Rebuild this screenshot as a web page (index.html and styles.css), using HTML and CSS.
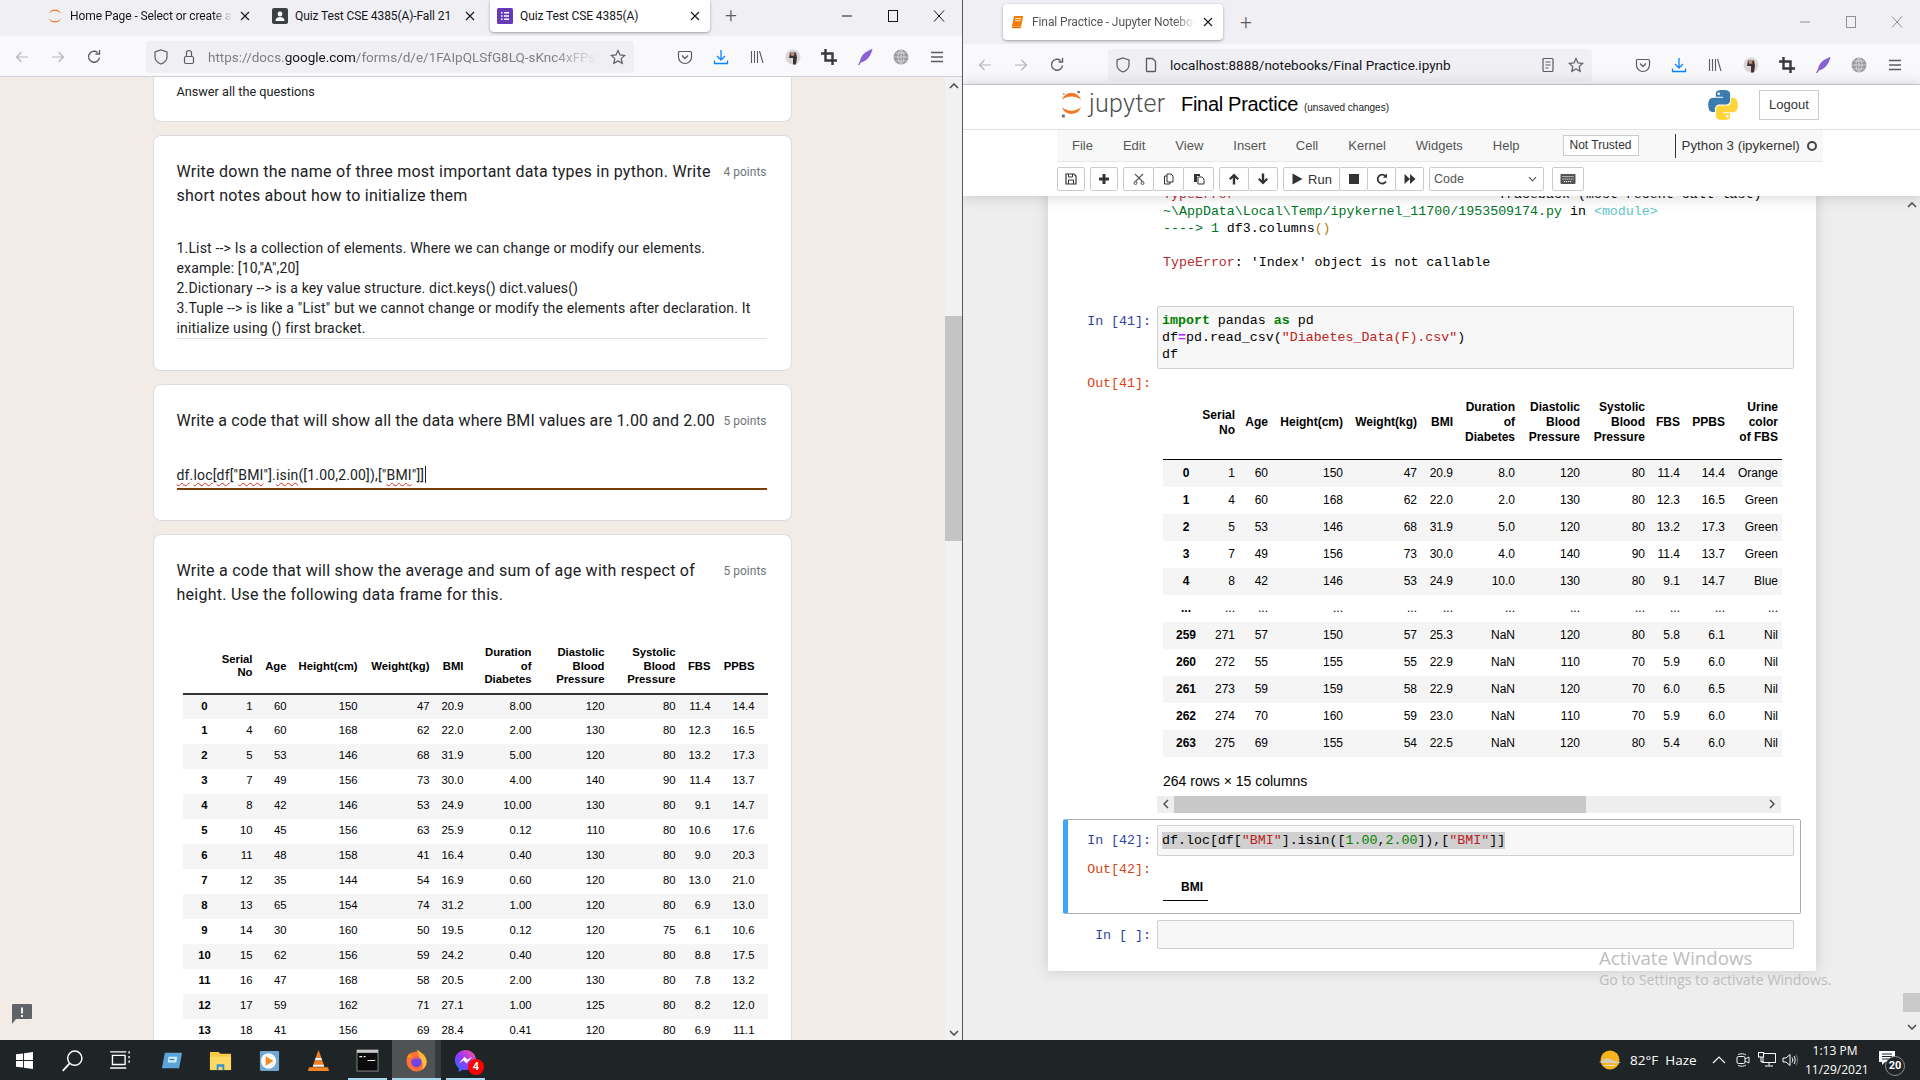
FILE: index.html
```html
<!DOCTYPE html>
<html lang="en">
<head>
    <meta charset="UTF-8">
    <title>Quiz Test CSE 4385(A)</title>
    <link rel="stylesheet" href="styles.css">
</head>
<body>
    <!-- shared browser toolbar icons -->
    <svg class="icon-defs" width="0" height="0">
        <symbol id="i-back" viewBox="0 0 16 16"><path d="M14 8H2.5M7.5 3l-5 5 5 5" fill="none" stroke="currentColor" stroke-width="1.2"/></symbol>
        <symbol id="i-forward" viewBox="0 0 16 16"><path d="M2 8h11.5M8.5 3l5 5-5 5" fill="none" stroke="currentColor" stroke-width="1.2"/></symbol>
        <symbol id="i-reload" viewBox="0 0 16 16"><path d="M13.5 8.5a5.5 5.5 0 1 1-2-5M13.5 1v4h-4" fill="none" stroke="currentColor" stroke-width="1.4"/></symbol>
        <symbol id="i-shield" viewBox="0 0 16 16"><path d="M8 1l6 2v5c0 3.2-2.6 5.7-6 7-3.4-1.3-6-3.8-6-7V3z" fill="none" stroke="currentColor" stroke-width="1.2"/></symbol>
        <symbol id="i-lock" viewBox="0 0 16 16"><rect x="3.5" y="7.5" width="9" height="7" rx="1.5" fill="none" stroke="currentColor" stroke-width="1.2"/><path d="M5.5 7.5V4a2.5 2.5 0 0 1 5 0v3.5" fill="none" stroke="currentColor" stroke-width="1.2"/></symbol>
        <symbol id="i-page" viewBox="0 0 16 16"><path d="M3.5 1.5h6l3 3V14a.5.5 0 0 1-.5.5H4a.5.5 0 0 1-.5-.5z" fill="none" stroke="currentColor" stroke-width="1.3"/></symbol>
        <symbol id="i-reader" viewBox="0 0 16 16"><rect x="3" y="1.5" width="10" height="13" rx="1" fill="none" stroke="currentColor" stroke-width="1.2"/><path d="M5.5 5h5M5.5 8h5M5.5 11h3" stroke="currentColor" stroke-width="1.2"/></symbol>
        <symbol id="i-star" viewBox="0 0 16 16"><path d="M8 1.500l2 4.400 4.700.5-3.500 3.200 1 4.700L8 11.900l-4.200 2.400 1-4.700-3.500-3.200 4.700-.5z" fill="none" stroke="currentColor" stroke-width="1.2"/></symbol>
        <symbol id="i-pocket" viewBox="0 0 16 16"><path d="M2.5 2.500h11a1 1 0 0 1 1 1V8a6.500 6.500 0 0 1-13 0V3.500a1 1 0 0 1 1-1z" fill="none" stroke="currentColor" stroke-width="1.2"/><path d="M5 6.500l3 3 3-3" fill="none" stroke="currentColor" stroke-width="1.3"/></symbol>
        <symbol id="i-download" viewBox="0 0 16 16"><path d="M8 1v9.500M4 7l4 4 4-4M1.500 11.500v3h13v-3" fill="none" stroke="#0a84ff" stroke-width="1.3"/></symbol>
        <symbol id="i-library" viewBox="0 0 16 16"><path d="M2.5 2v12M5.500 2v12M8.500 2v12M10.500 2l3.500 12" fill="none" stroke="currentColor" stroke-width="1.1"/></symbol>
        <symbol id="i-avatar" viewBox="0 0 16 16"><circle cx="8" cy="8" r="7.5" fill="#d9d4d6"/><path d="M5 3.500h6l1 5-1 7H8V9H4z" fill="#3d3238"/><circle cx="7.5" cy="5" r="2" fill="#b98f80"/></symbol>
        <symbol id="i-crop" viewBox="0 0 16 16"><path d="M4.500 0v11.500H16M0 4.500h11.500V16" fill="none" stroke="#38383d" stroke-width="2.4"/></symbol>
        <symbol id="i-feather" viewBox="0 0 16 16"><path d="M15.500 0C9 2 4 6 3 12l-2 4 1 .5 2-3C10 12 14 7 15.500 0z" fill="#8a63d2"/></symbol>
        <symbol id="i-globe" viewBox="0 0 16 16"><circle cx="8" cy="8" r="7.5" fill="#9a9a9e"/><path d="M1 8h14M8 .5v15M2.500 4h11M2.500 12h11M8 .5C4 4 4 12 8 15.500M8 .5c4 3.500 4 11.500 0 15" fill="none" stroke="#e5e5e8" stroke-width=".7"/></symbol>
        <symbol id="i-menu" viewBox="0 0 16 16"><path d="M2 3.500h12M2 8h12M2 12.500h12" stroke="currentColor" stroke-width="1.3"/></symbol>
        <symbol id="i-min" viewBox="0 0 12 12"><path d="M1 6h10" stroke="currentColor"/></symbol>
        <symbol id="i-max" viewBox="0 0 12 12"><rect x="1.5" y=".5" width="9" height="11" fill="none" stroke="currentColor"/></symbol>
        <symbol id="i-close" viewBox="0 0 12 12"><path d="M1 .5l10 11M11 .5l-10 11" stroke="currentColor"/></symbol>
        <symbol id="i-tabx" viewBox="0 0 10 10"><path d="M1 1l8 8M9 1l-8 8" stroke="currentColor" stroke-width="1.1"/></symbol>
    </svg>

    <div class="desktop">
        <!-- left browser window: google form -->
        <section class="window window-left">
            <div class="tabstrip">
                <div class="tab">
                    <svg class="favicon" viewBox="0 0 16 16"><path d="M2 5.500a6.500 6.500 0 0 1 12 0 8 8 0 0 0-12 0zM2 10.500a6.500 6.500 0 0 0 12 0 8 8 0 0 1-12 0z" fill="#f37726"/></svg>
                    <span class="tab-title fade">Home Page - Select or create a notebook</span>
                    <svg class="tab-x"><use href="#i-tabx"/></svg>
                </div>
                <div class="tab">
                    <svg class="favicon" viewBox="0 0 16 16"><rect width="16" height="16" rx="2" fill="#3c4043"/><circle cx="8" cy="6" r="2.4" fill="#fff"/><path d="M3.500 13c0-3 2-4 4.500-4s4.500 1 4.500 4z" fill="#fff"/></svg>
                    <span class="tab-title">Quiz Test CSE 4385(A)-Fall 21</span>
                    <svg class="tab-x"><use href="#i-tabx"/></svg>
                </div>
                <div class="tab tab-active">
                    <svg class="favicon" viewBox="0 0 16 16"><rect width="16" height="16" rx="1.5" fill="#673ab7"/><path d="M4 4h1.500v1.500H4zM4 7.300h1.500v1.500H4zM4 10.500h1.500V12H4zM7 4h5v1.500H7zM7 7.300h5v1.500H7zM7 10.500h5V12H7z" fill="#fff"/></svg>
                    <span class="tab-title">Quiz Test CSE 4385(A)</span>
                    <svg class="tab-x"><use href="#i-tabx"/></svg>
                </div>
                <div class="tab-plus">+</div>
                <div class="win-controls">
                    <svg><use href="#i-min"/></svg>
                    <svg><use href="#i-max"/></svg>
                    <svg><use href="#i-close"/></svg>
                </div>
            </div>
            <div class="navbar">
                <svg class="nav-icon muted"><use href="#i-back"/></svg>
                <svg class="nav-icon muted"><use href="#i-forward"/></svg>
                <svg class="nav-icon"><use href="#i-reload"/></svg>
                <div class="urlbar url-left">
                    <svg class="nav-icon"><use href="#i-shield"/></svg>
                    <svg class="nav-icon"><use href="#i-lock"/></svg>
                    <span class="url-text fade">https://docs.<b>google.com</b>/forms/d/e/1FAIpQLSfG8LQ-sKnc4xFPsU5t</span>
                    <svg class="nav-icon"><use href="#i-star"/></svg>
                </div>
                <div class="nav-tools">
                    <svg class="nav-icon"><use href="#i-pocket"/></svg>
                    <svg class="nav-icon"><use href="#i-download"/></svg>
                    <svg class="nav-icon"><use href="#i-library"/></svg>
                    <svg class="nav-icon"><use href="#i-avatar"/></svg>
                    <svg class="nav-icon"><use href="#i-crop"/></svg>
                    <svg class="nav-icon"><use href="#i-feather"/></svg>
                    <svg class="nav-icon"><use href="#i-globe"/></svg>
                    <svg class="nav-icon"><use href="#i-menu"/></svg>
                </div>
            </div>
            <div class="form-page">
                <div class="form-scroll">
                    <div class="card card-intro">Answer all the questions</div>

                    <div class="card">
                        <div class="q-head">
                            <div class="q-title">Write down the name of three most important data types in python. Write short notes about how to initialize them</div>
                            <div class="q-points">4 points</div>
                        </div>
                        <div class="q-answer">1.List --&gt; Is a collection of elements. Where we can change or modify our elements.<br>example: [10,"A",20]<br>2.Dictionary --&gt; is a key value structure. dict.keys() dict.values()<br>3.Tuple --&gt; is like a "List" but we cannot change or modify the elements after declaration. It initialize using () first bracket.</div>
                    </div>

                    <div class="card card-code">
                        <div class="q-head">
                            <div class="q-title">Write a code that will show all the data where BMI values are 1.00 and 2.00</div>
                            <div class="q-points">5 points</div>
                        </div>
                        <div class="q-answer q-answer-focus"><span class="typo">df</span>.<span class="typo">loc</span>[<span class="typo">df</span>["<span class="typo">BMI</span>"].<span class="typo">isin</span>([1.00,2.00]),["<span class="typo">BMI</span>"]]<span class="caret"></span></div>
                    </div>

                    <div class="card card-last">
                        <div class="q-head">
                            <div class="q-title">Write a code that will show the average and sum of age with respect of height. Use the following data frame for this.</div>
                            <div class="q-points">5 points</div>
                        </div>
                        <table class="df df-form">
                            <colgroup><col><col><col><col><col><col><col><col><col><col><col></colgroup>
                            <thead>
                                <tr><th></th><th>Serial<br>No</th><th>Age</th><th>Height(cm)</th><th>Weight(kg)</th><th>BMI</th><th>Duration<br>of<br>Diabetes</th><th>Diastolic<br>Blood<br>Pressure</th><th>Systolic<br>Blood<br>Pressure</th><th>FBS</th><th>PPBS</th></tr>
                            </thead>
                            <tbody>
                                <tr><th>0</th><td>1</td><td>60</td><td>150</td><td>47</td><td>20.9</td><td>8.00</td><td>120</td><td>80</td><td>11.4</td><td>14.4</td></tr>
                                <tr><th>1</th><td>4</td><td>60</td><td>168</td><td>62</td><td>22.0</td><td>2.00</td><td>130</td><td>80</td><td>12.3</td><td>16.5</td></tr>
                                <tr><th>2</th><td>5</td><td>53</td><td>146</td><td>68</td><td>31.9</td><td>5.00</td><td>120</td><td>80</td><td>13.2</td><td>17.3</td></tr>
                                <tr><th>3</th><td>7</td><td>49</td><td>156</td><td>73</td><td>30.0</td><td>4.00</td><td>140</td><td>90</td><td>11.4</td><td>13.7</td></tr>
                                <tr><th>4</th><td>8</td><td>42</td><td>146</td><td>53</td><td>24.9</td><td>10.00</td><td>130</td><td>80</td><td>9.1</td><td>14.7</td></tr>
                                <tr><th>5</th><td>10</td><td>45</td><td>156</td><td>63</td><td>25.9</td><td>0.12</td><td>110</td><td>80</td><td>10.6</td><td>17.6</td></tr>
                                <tr><th>6</th><td>11</td><td>48</td><td>158</td><td>41</td><td>16.4</td><td>0.40</td><td>130</td><td>80</td><td>9.0</td><td>20.3</td></tr>
                                <tr><th>7</th><td>12</td><td>35</td><td>144</td><td>54</td><td>16.9</td><td>0.60</td><td>120</td><td>80</td><td>13.0</td><td>21.0</td></tr>
                                <tr><th>8</th><td>13</td><td>65</td><td>154</td><td>74</td><td>31.2</td><td>1.00</td><td>120</td><td>80</td><td>6.9</td><td>13.0</td></tr>
                                <tr><th>9</th><td>14</td><td>30</td><td>160</td><td>50</td><td>19.5</td><td>0.12</td><td>120</td><td>75</td><td>6.1</td><td>10.6</td></tr>
                                <tr><th>10</th><td>15</td><td>62</td><td>156</td><td>59</td><td>24.2</td><td>0.40</td><td>120</td><td>80</td><td>8.8</td><td>17.5</td></tr>
                                <tr><th>11</th><td>16</td><td>47</td><td>168</td><td>58</td><td>20.5</td><td>2.00</td><td>130</td><td>80</td><td>7.8</td><td>13.2</td></tr>
                                <tr><th>12</th><td>17</td><td>59</td><td>162</td><td>71</td><td>27.1</td><td>1.00</td><td>125</td><td>80</td><td>8.2</td><td>12.0</td></tr>
                                <tr><th>13</th><td>18</td><td>41</td><td>156</td><td>69</td><td>28.4</td><td>0.41</td><td>120</td><td>80</td><td>6.9</td><td>11.1</td></tr>
                            </tbody>
                        </table>
                    </div>
                </div>
                <div class="scrollbar">
                    <svg class="sb-arrow" viewBox="0 0 10 6"><path d="M1 5l4-4 4 4" fill="none" stroke="#505050" stroke-width="1.6"/></svg>
                    <div class="sb-thumb"></div>
                    <svg class="sb-arrow sb-bottom" viewBox="0 0 10 6"><path d="M1 1l4 4 4-4" fill="none" stroke="#505050" stroke-width="1.6"/></svg>
                </div>
                <svg class="feedback" viewBox="0 0 20 20"><path d="M1 0h18a1 1 0 0 1 1 1v13a1 1 0 0 1-1 1H4l-4 5V1a1 1 0 0 1 1-1z" fill="#5f6368"/><path d="M9 3.500h2v6H9zM9 11h2v2H9z" fill="#f3ebe6"/></svg>
            </div>
        </section>

        <!-- right browser window: jupyter notebook -->
        <section class="window window-right">
            <div class="tabstrip tabstrip-right">
                <div class="tab tab-active">
                    <svg class="favicon" viewBox="0 0 16 16"><path d="M3.500 1H14l-2.500 12H1z" fill="#f57c00"/><path d="M5 4h6.500M4.500 6.500H11" stroke="#fff" stroke-width="1"/><path d="M1 13.500h10.500l-.3 1.500H1z" fill="#ef6c00"/></svg>
                    <span class="tab-title fade">Final Practice - Jupyter Notebook</span>
                    <svg class="tab-x"><use href="#i-tabx"/></svg>
                </div>
                <div class="tab-plus">+</div>
                <div class="win-controls win-controls-dim">
                    <svg><use href="#i-min"/></svg>
                    <svg><use href="#i-max"/></svg>
                    <svg><use href="#i-close"/></svg>
                </div>
            </div>
            <div class="navbar">
                <svg class="nav-icon muted"><use href="#i-back"/></svg>
                <svg class="nav-icon muted"><use href="#i-forward"/></svg>
                <svg class="nav-icon"><use href="#i-reload"/></svg>
                <div class="urlbar url-right">
                    <svg class="nav-icon"><use href="#i-shield"/></svg>
                    <svg class="nav-icon"><use href="#i-page"/></svg>
                    <span class="url-text url-dark">localhost:8888/notebooks/Final Practice.ipynb</span>
                    <svg class="nav-icon"><use href="#i-reader"/></svg>
                    <svg class="nav-icon"><use href="#i-star"/></svg>
                </div>
                <div class="nav-tools">
                    <svg class="nav-icon"><use href="#i-pocket"/></svg>
                    <svg class="nav-icon"><use href="#i-download"/></svg>
                    <svg class="nav-icon"><use href="#i-library"/></svg>
                    <svg class="nav-icon"><use href="#i-avatar"/></svg>
                    <svg class="nav-icon"><use href="#i-crop"/></svg>
                    <svg class="nav-icon"><use href="#i-feather"/></svg>
                    <svg class="nav-icon"><use href="#i-globe"/></svg>
                    <svg class="nav-icon"><use href="#i-menu"/></svg>
                </div>
            </div>

            <header class="nb-header">
                <div class="nb-top">
                    <svg class="jp-mark" viewBox="0 0 22 30">
                        <path d="M1 10C3 5 7 3 11 3s8 2 10 7C18 7.500 14.500 6.500 11 6.500S4 7.500 1 10zM1 18c3 2.500 6.500 3.500 10 3.500s7-1 10-3.500c-2 5-6 7-10 7S3 23 1 18z" fill="#f37726"/>
                        <circle cx="18.500" cy="2" r="1.500" fill="#767677"/><circle cx="2.500" cy="27" r="1.800" fill="#767677"/><circle cx="3" cy="4" r="1" fill="#9e9e9e"/>
                    </svg>
                    <span class="jp-word">jupyter</span>
                    <span class="nb-name">Final Practice</span>
                    <span class="nb-save">(unsaved changes)</span>
                    <svg class="py-logo" viewBox="0 0 111 112">
                        <g><path d="M54.900 0C50.300 0 46 .4 42.100 1.100 30.800 3.100 28.700 7.300 28.700 15v10.200h26.700v3.400H18.700C10.900 28.600 4.100 33.300 2 42.100c-2.500 10.100-2.600 16.400 0 26.900 1.900 7.900 6.400 13.500 14.200 13.500h9.200V70.300c0-8.800 7.600-16.600 16.700-16.600h26.700c7.400 0 13.400-6.100 13.400-13.600V15c0-7.200-6.100-12.700-13.400-13.900C64.200.3 59.400 0 54.900 0z" fill="#3b7cb0"/><circle cx="39.500" cy="14" r="5" fill="#fff"/></g>
                        <g transform="rotate(180 55.500 56)"><path d="M54.900 0C50.300 0 46 .4 42.100 1.100 30.800 3.100 28.700 7.300 28.700 15v10.200h26.700v3.400H18.700C10.900 28.600 4.100 33.300 2 42.100c-2.500 10.100-2.600 16.400 0 26.900 1.900 7.900 6.400 13.500 14.200 13.500h9.200V70.300c0-8.800 7.600-16.600 16.700-16.600h26.700c7.400 0 13.400-6.100 13.400-13.600V15c0-7.200-6.100-12.700-13.400-13.900C64.200.3 59.400 0 54.900 0z" fill="#ffd43b"/><circle cx="39.500" cy="14" r="5" fill="#fff"/></g>
                    </svg>
                    <button class="logout">Logout</button>
                </div>
                <div class="nb-menu-row">
                    <nav class="nb-menu">
                        <span>File</span><span>Edit</span><span>View</span><span>Insert</span><span>Cell</span><span>Kernel</span><span>Widgets</span><span>Help</span>
                        <span class="not-trusted">Not Trusted</span>
                        <span class="kernel">Python 3 (ipykernel)<i class="kernel-dot"></i></span>
                    </nav>
                </div>
                <div class="nb-tools">
                    <div class="btn-group"><button class="tb tb-one"><svg viewBox="0 0 12 12"><path d="M1 1h8l2 2v8H1z" fill="none" stroke="#333" stroke-width="1.2"/><path d="M3.500 1v3h4V1M3.500 11V7h5v4" fill="none" stroke="#333"/></svg></button></div>
                    <div class="btn-group"><button class="tb tb-one"><svg viewBox="0 0 12 12"><path d="M4.500 1h3v3.500H11v3H7.500V11h-3V7.500H1v-3h3.500z" fill="#333"/></svg></button></div>
                    <div class="btn-group">
                        <button class="tb tb-mid"><svg viewBox="0 0 12 12"><path d="M2 1l8 8M10 1L2 9" stroke="#555" stroke-width="1.1"/><circle cx="2.5" cy="10" r="1.5" fill="none" stroke="#555"/><circle cx="9.5" cy="10" r="1.5" fill="none" stroke="#555"/></svg></button>
                        <button class="tb tb-mid"><svg viewBox="0 0 12 12"><path d="M4 1h4l2 2v6H4zM4 3H1.500v8h5.500V9" fill="#fff" stroke="#333"/></svg></button>
                        <button class="tb tb-mid"><svg viewBox="0 0 12 12"><path d="M1 1h6v2H4v6H1z" fill="#333"/><path d="M5 4h4l2 2v5H5z" fill="#fff" stroke="#333"/></svg></button>
                    </div>
                    <div class="btn-group">
                        <button class="tb tb-arrow"><svg viewBox="0 0 12 12"><path d="M6 .5l5 5-1.500 1.500L7.200 4.800V11.500H4.800V4.800L2.500 7 1 5.500z" fill="#333"/></svg></button>
                        <button class="tb tb-arrow"><svg viewBox="0 0 12 12"><path d="M6 11.500l5-5L9.500 5 7.200 7.200V.5H4.800v6.700L2.500 5 1 6.500z" fill="#333"/></svg></button>
                    </div>
                    <div class="btn-group">
                        <button class="tb tb-run"><svg viewBox="0 0 12 12"><path d="M1.500 .5l10 5.500-10 5.500z" fill="#333"/></svg>Run</button>
                        <button class="tb tb-ctl"><svg viewBox="0 0 12 12"><path d="M1 1h10v10H1z" fill="#333"/></svg></button>
                        <button class="tb tb-ctl"><svg viewBox="0 0 12 12"><path d="M10 8.500A4.500 4.500 0 1 1 9.500 3" fill="none" stroke="#333" stroke-width="1.8"/><path d="M11 .5v4.200H6.800z" fill="#333"/></svg></button>
                        <button class="tb tb-ctl"><svg viewBox="0 0 12 12"><path d="M.5 1L6 6 .5 11zM6 1l5.500 5L6 11z" fill="#333"/></svg></button>
                    </div>
                    <div class="cell-type">Code<svg viewBox="0 0 10 6"><path d="M1 1l4 4 4-4" fill="none" stroke="#444" stroke-width="1.2"/></svg></div>
                    <button class="tb tb-kbd"><svg viewBox="0 0 16 12"><rect x=".5" y="1" width="15" height="10" rx="1" fill="#555"/><path d="M2.500 3.500h11M2.500 6h11M4 8.500h8" stroke="#eee" stroke-width="1.2" stroke-dasharray="1.2 .8"/></svg></button>
                </div>
            </header>

            <div class="nb-site">
                <div class="notebook">
                    <pre class="trace"><span class="c-err">TypeError</span>                                 Traceback (most recent call last)
<span class="c-path">~\AppData\Local\Temp/ipykernel_11700/1953509174.py</span> in <span class="c-mod">&lt;module&gt;</span>
<span class="c-path">----&gt; 1</span> df3.columns<span class="c-paren">()</span>

<span class="c-err">TypeError</span>: 'Index' object is not callable</pre>

                    <div class="cell cell-41">
                        <div class="cell-row">
                            <div class="prompt p-in">In [41]:</div>
                            <pre class="input">
<span class="kw">import</span> pandas <span class="kw">as</span> pd
df<span class="op">=</span>pd.read_csv(<span class="str">"Diabetes_Data(F).csv"</span>)
df</pre>
                        </div>
                        <div class="cell-row out-row">
                            <div class="prompt p-out">Out[41]:</div>
                            <div class="output">
                                <table class="df df-nb">
                                    <colgroup><col><col><col><col><col><col><col><col><col><col><col><col></colgroup>
                                    <thead>
                                        <tr><th></th><th>Serial<br>No</th><th>Age</th><th>Height(cm)</th><th>Weight(kg)</th><th>BMI</th><th>Duration<br>of<br>Diabetes</th><th>Diastolic<br>Blood<br>Pressure</th><th>Systolic<br>Blood<br>Pressure</th><th>FBS</th><th>PPBS</th><th>Urine<br>color<br>of FBS</th></tr>
                                    </thead>
                                    <tbody>
                                        <tr><th>0</th><td>1</td><td>60</td><td>150</td><td>47</td><td>20.9</td><td>8.0</td><td>120</td><td>80</td><td>11.4</td><td>14.4</td><td>Orange</td></tr>
                                        <tr><th>1</th><td>4</td><td>60</td><td>168</td><td>62</td><td>22.0</td><td>2.0</td><td>130</td><td>80</td><td>12.3</td><td>16.5</td><td>Green</td></tr>
                                        <tr><th>2</th><td>5</td><td>53</td><td>146</td><td>68</td><td>31.9</td><td>5.0</td><td>120</td><td>80</td><td>13.2</td><td>17.3</td><td>Green</td></tr>
                                        <tr><th>3</th><td>7</td><td>49</td><td>156</td><td>73</td><td>30.0</td><td>4.0</td><td>140</td><td>90</td><td>11.4</td><td>13.7</td><td>Green</td></tr>
                                        <tr><th>4</th><td>8</td><td>42</td><td>146</td><td>53</td><td>24.9</td><td>10.0</td><td>130</td><td>80</td><td>9.1</td><td>14.7</td><td>Blue</td></tr>
                                        <tr><th>...</th><td>...</td><td>...</td><td>...</td><td>...</td><td>...</td><td>...</td><td>...</td><td>...</td><td>...</td><td>...</td><td>...</td></tr>
                                        <tr><th>259</th><td>271</td><td>57</td><td>150</td><td>57</td><td>25.3</td><td>NaN</td><td>120</td><td>80</td><td>5.8</td><td>6.1</td><td>Nil</td></tr>
                                        <tr><th>260</th><td>272</td><td>55</td><td>155</td><td>55</td><td>22.9</td><td>NaN</td><td>110</td><td>70</td><td>5.9</td><td>6.0</td><td>Nil</td></tr>
                                        <tr><th>261</th><td>273</td><td>59</td><td>159</td><td>58</td><td>22.9</td><td>NaN</td><td>120</td><td>70</td><td>6.0</td><td>6.5</td><td>Nil</td></tr>
                                        <tr><th>262</th><td>274</td><td>70</td><td>160</td><td>59</td><td>23.0</td><td>NaN</td><td>110</td><td>70</td><td>5.9</td><td>6.0</td><td>Nil</td></tr>
                                        <tr><th>263</th><td>275</td><td>69</td><td>155</td><td>54</td><td>22.5</td><td>NaN</td><td>120</td><td>80</td><td>5.4</td><td>6.0</td><td>Nil</td></tr>
                                    </tbody>
                                </table>
                                <p class="df-shape">264 rows × 15 columns</p>
                                <div class="h-scroll">
                                    <svg class="hs-arrow" viewBox="0 0 6 10"><path d="M5 1L1 5l4 4" fill="none" stroke="#505050" stroke-width="1.5"/></svg>
                                    <div class="hs-thumb"></div>
                                    <svg class="hs-arrow hs-end" viewBox="0 0 6 10"><path d="M1 1l4 4-4 4" fill="none" stroke="#505050" stroke-width="1.5"/></svg>
                                </div>
                            </div>
                        </div>
                    </div>

                    <div class="cell cell-selected">
                        <div class="cell-row">
                            <div class="prompt p-in">In [42]:</div>
                            <pre class="input input-sel"><span class="selection">df.loc[df[<span class="str">"BMI"</span>].isin([<span class="num">1.00</span>,<span class="num">2.00</span>]),[<span class="str">"BMI"</span>]]</span></pre>
                        </div>
                        <div class="cell-row out-row-empty">
                            <div class="prompt p-out">Out[42]:</div>
                            <div class="empty-df"><span>BMI</span></div>
                        </div>
                    </div>

                    <div class="cell">
                        <div class="cell-row">
                            <div class="prompt p-in">In [ ]:</div>
                            <pre class="input input-empty"></pre>
                        </div>
                    </div>
                </div>
                <div class="activate">
                    <div class="activate-big">Activate Windows</div>
                    <div>Go to Settings to activate Windows.</div>
                </div>
                <div class="scrollbar scrollbar-site">
                    <svg class="sb-arrow" viewBox="0 0 10 6"><path d="M1 5l4-4 4 4" fill="none" stroke="#505050" stroke-width="1.6"/></svg>
                    <div class="sb-thumb sb-thumb-low"></div>
                    <svg class="sb-arrow" viewBox="0 0 10 6"><path d="M1 1l4 4 4-4" fill="none" stroke="#505050" stroke-width="1.6"/></svg>
                </div>
            </div>
        </section>
    </div>

    <!-- windows taskbar -->
    <footer class="taskbar">
        <div class="task-slot task-fixed"><svg class="win-logo" viewBox="0 0 18 18"><path d="M0 2.500l7.500-1v7H0zM8.500 1.400L18 0v8.500H8.500zM0 9.500h7.500v7l-7.500-1zM8.500 9.500H18V18l-9.500-1.400z" fill="#fff"/></svg></div>
        <div class="task-slot task-fixed"><svg viewBox="0 0 20 20"><circle cx="12" cy="8" r="6.2" fill="none" stroke="#fff" stroke-width="1.3"/><path d="M7.500 12.500L1.500 19" stroke="#fff" stroke-width="1.5"/></svg></div>
        <div class="task-slot task-fixed"><svg viewBox="0 0 20 20"><path d="M3 5.500h11v8H3zM1 2.500h14M1 16.500h14M17.500 2v2M17.500 6v2M17.500 10v2" fill="none" stroke="#fff" stroke-width="1.2"/></svg></div>
        <div class="task-slot task-first"><svg viewBox="0 0 24 24"><path d="M5 4h18l-3 16H2z" fill="#5ba4d9"/><path d="M9 8h9l-1 6H8z" fill="#d5ecf9"/><path d="M10 11h5" stroke="#3f7fb3" stroke-width="1.5"/></svg></div>
        <div class="task-slot"><svg viewBox="0 0 24 24"><path d="M1 3h9l2 2h11v17H1z" fill="#f7c948"/><path d="M1 8h22v14H1z" fill="#ffd966"/><path d="M8 16h8v6H8z" fill="#2f8fd8"/><path d="M10 18.500h4V22h-4z" fill="#ffd966"/></svg></div>
        <div class="task-slot"><svg viewBox="0 0 24 24"><rect x="2" y="2" width="20" height="21" rx="1.5" fill="#6fa8d0"/><circle cx="11" cy="12.500" r="8" fill="#f7f7f7"/><path d="M8 7.500l8 5-8 5z" fill="#f08a24"/></svg></div>
        <div class="task-slot"><svg viewBox="0 0 24 24"><path d="M12 1l3 8H9z" fill="#f58220"/><path d="M9 9h6l1 3H8z" fill="#f2f2f2"/><path d="M8 12h8l2 6H6z" fill="#f58220"/><path d="M6.500 16.500h11l.5 2H6z" fill="#eee"/><path d="M2 19h20l1 4H1z" fill="#f58220"/></svg></div>
        <div class="task-slot"><svg class="cmd" viewBox="0 0 24 24"><rect x="1" y="1" width="22" height="22" fill="#0c0c0c" stroke="#8a8a8a"/><rect x="1" y="1" width="22" height="3" fill="#c8c8c8"/><path d="M3.500 8h3M8 8h2M12 12h8" stroke="#f2f2f2" stroke-width="1.2"/></svg></div>
        <div class="task-slot task-active"><svg viewBox="0 0 24 24"><circle cx="12" cy="13" r="10.5" fill="#ff7139"/><path d="M12 .5c5 3 10 7 10.500 12.500.2 4-2 7-5 9 3-5 0-9-3-11 1-4-1-8-2.500-10.500z" fill="#ffbd3a"/><path d="M2 9c1-3 2.500-4 4-4.500-1 2 0 3 2 4z" fill="#ff980e"/><circle cx="12" cy="13.500" r="5.500" fill="#7542e5"/><path d="M7 11c2-2.500 7-3 9 0-2-1-6-1-9 0z" fill="#ff7139"/></svg></div>
        <div class="task-slot task-badge">
            <svg viewBox="0 0 24 24"><defs><linearGradient id="messenger-fill" x1="0" y1="1" x2="1" y2="0"><stop offset="0" stop-color="#0a7cff"/><stop offset=".5" stop-color="#a033ff"/><stop offset="1" stop-color="#ff5c87"/></linearGradient></defs><path d="M12 1c6.200 0 11 4.500 11 10.500S18.200 22 12 22c-1 0-2-.1-3-.4L5 24v-4C2.500 18 1 15 1 11.500 1 5.500 5.800 1 12 1z" fill="url(#messenger-fill)"/><path d="M5 15l6-7 3 3 5-3-6 7-3-3z" fill="#fff"/></svg>
            <span class="badge">4</span>
        </div>

        <div class="tray">
            <svg class="tray-sun" viewBox="0 0 22 20"><circle cx="11" cy="10" r="9.5" fill="#f6b31e"/><path d="M0 12c3-.5 4-3 8-3.500 3-.4 5 2 8 2.500l6 1.500c-3 1-6 1-9 .5-4-.5-9 1-13-1z" fill="#d9cdb8"/><path d="M4 15.500c3-1 10-1 14 0-4 .8-10 .8-14 0z" fill="#e3dac9"/></svg>
            <span class="tray-weather">82°F&nbsp; Haze</span>
            <svg class="tray-ico tray-chev" viewBox="0 0 16 16"><path d="M2 11l6-6 6 6" fill="none" stroke="#fff" stroke-width="1.2"/></svg>
            <svg class="tray-ico tray-meet" viewBox="0 0 16 16"><rect x="2" y="4.500" width="8" height="7" rx="1.5" fill="none" stroke="#fff"/><path d="M10 7l4-2v6l-4-2M3 2.500c2.500-1 6-1 8 .5M3 13.500c2.500 1 6 1 8-.5" fill="none" stroke="#fff" stroke-width=".9"/></svg>
            <svg class="tray-ico tray-net" viewBox="0 0 18 16"><rect x="5" y="1.500" width="12.500" height="9" fill="none" stroke="#fff"/><rect x=".5" y=".5" width="5" height="4.500" fill="#1f2426" stroke="#fff"/><path d="M11 10.500v3M7 14h8M3 5v5h3" fill="none" stroke="#fff"/></svg>
            <svg class="tray-ico tray-vol" viewBox="0 0 16 16"><path d="M1 6h3l4-3.500v11L4 10H1z" fill="none" stroke="#fff"/><path d="M10 5.500c1 1.500 1 3.500 0 5M12 4c1.600 2.400 1.600 5.600 0 8" fill="none" stroke="#fff"/><path d="M14 2.500c2 3.500 2 7.500 0 11" fill="none" stroke="#777"/></svg>
            <div class="clock"><div>1:13 PM</div><div>11/29/2021</div></div>
            <div class="notif">
                <svg viewBox="0 0 16 14"><path d="M0 0h16v11H6l-3 3v-3H0z" fill="#fff"/><path d="M3 3h10M3 5.500h10M3 8h7" stroke="#1f2426"/></svg>
                <span class="notif-count">20</span>
            </div>
        </div>
    </footer>
</body>
</html>
```

FILE: styles.css
```css
* {
    box-sizing: border-box;
}

html, body {
    margin: 0;
    padding: 0;
    height: 100%;
    overflow: hidden;
}

body {
    width: 1920px;
    height: 1080px;
    display: flex;
    flex-direction: column;
    font-family: Roboto, "Liberation Sans", sans-serif;
    background-color: #1f2426;
}

.icon-defs {
    position: absolute;
}

.desktop {
    display: flex;
    height: 1040px;
}

.window {
    position: relative;
    display: flex;
    flex-direction: column;
    background-color: #fff;
    overflow: hidden;
}

.window-left {
    width: 962px;
}

.window-right {
    width: 958px;
    border-left: 1px solid #56585a;
}

/* browser chrome */
.tabstrip {
    height: 36px;
    display: flex;
    align-items: flex-start;
    padding-left: 40px;
    gap: 5px;
    background-color: #f0f0f4;
    flex: none;
}

.tabstrip-right {
    height: 44px;
    padding-left: 40px;
    padding-top: 4px;
}

.tab {
    width: 220px;
    height: 31px;
    display: flex;
    align-items: center;
    padding: 0 10px 0 7px;
    font-size: 12px;
    letter-spacing: -0.1px;
    color: #15141a;
    flex: none;
}

.tab-active {
    height: 32px;
    padding-bottom: 1px;
    background-color: #fff;
    border-radius: 0 0 4px 4px;
    box-shadow: 0 1px 3px rgba(0, 0, 0, 0.35);
}

.tabstrip-right .tab-active {
    height: 36px;
    border-radius: 4px;
    padding-left: 8px;
    color: #55555a;
}

.favicon {
    width: 16px;
    height: 16px;
    flex: none;
    margin-right: 7px;
}

.tabstrip-right .favicon {
    width: 14px;
    height: 16px;
}

.tab-title {
    flex: 1;
    white-space: nowrap;
    overflow: hidden;
}

.fade {
    -webkit-mask-image: linear-gradient(to right, #000 88%, transparent 100%);
    mask-image: linear-gradient(to right, #000 88%, transparent 100%);
}

.tab-x {
    width: 10px;
    height: 10px;
    flex: none;
    margin-left: 8px;
    color: #15141a;
}

.tab-plus {
    margin-left: 10px;
    font-size: 21px;
    font-weight: 300;
    line-height: 30px;
    color: #5b5b66;
}

.tabstrip-right .tab-plus {
    line-height: 36px;
    margin-left: 12px;
}

.win-controls {
    margin-left: auto;
    display: flex;
    height: 32px;
    color: #15141a;
    align-self: flex-start;
}

.tabstrip-right .win-controls {
    margin-top: -4px;
    height: 44px;
}

.win-controls svg {
    width: 46px;
    height: 100%;
    padding: 0 17px;
}

.win-controls-dim {
    color: #8f8f94;
}

.navbar {
    height: 41px;
    display: flex;
    align-items: center;
    padding: 1px 0 0 14px;
    background-color: #f9f9fb;
    border-bottom: 1px solid #cfcfd8;
    gap: 20px;
    flex: none;
}

.nav-icon {
    width: 16px;
    height: 16px;
    flex: none;
    color: #5b5b66;
}

.muted {
    color: #b5b5bb;
}

.urlbar {
    height: 32px;
    margin-left: 24px;
    display: flex;
    align-items: center;
    background-color: #f0f0f4;
    border-radius: 4px;
    padding: 0 8px 0 7px;
    gap: 12px;
    font-size: 13.5px;
    flex: none;
}

.url-left {
    width: 488px;
}

.url-right {
    width: 484px;
    margin-left: 23px;
}

.url-text {
    flex: 1;
    white-space: nowrap;
    overflow: hidden;
    color: #7e7e85;
    margin-left: -1px;
}

.url-text b {
    font-weight: 400;
    color: #15141a;
}

.url-dark {
    color: #15141a;
}

.nav-tools {
    display: flex;
    gap: 20px;
    margin-left: 23px;
}

/* google form */
.form-page {
    position: relative;
    flex: 1;
    display: flex;
    min-height: 0;
    background-color: #f3ebe6;
}

.form-scroll {
    flex: 1;
    min-width: 0;
    overflow: hidden;
    display: flex;
    flex-direction: column;
    padding-left: 153px;
    gap: 13px;
}

.card {
    width: 638.5px;
    flex: none;
    background-color: #fff;
    border: 1px solid #dadce0;
    border-radius: 8px;
    padding: 24px 24px 31px 22.5px;
}

.card-intro {
    margin-top: -30px;
    height: 75px;
    padding-top: 34px;
    font-size: 12.7px;
    line-height: 20px;
    color: #202124;
}

.card-code {
    padding-bottom: 30px;
}

.card-code .q-title {
    white-space: nowrap;
    letter-spacing: 0.12px;
}

.card-last {
    padding-bottom: 40px;
}

.q-head {
    display: flex;
    justify-content: space-between;
}

.q-title {
    width: 544px;
    font-size: 16px;
    line-height: 24px;
    letter-spacing: 0.25px;
    color: #202124;
}

.q-points {
    font-size: 12px;
    line-height: 24px;
    color: #70757a;
    white-space: nowrap;
}

.q-answer {
    margin-top: 30px;
    font-size: 14px;
    line-height: 20px;
    letter-spacing: 0.17px;
    color: #202124;
    padding-bottom: 0;
    border-bottom: 1px solid #e0e0e0;
}

.q-answer-focus {
    margin-top: 32px;
    height: 25px;
    border-bottom: 2px solid #7a3d06;
}

.typo {
    text-decoration: underline wavy #d93025 1px;
    text-underline-offset: 2px;
}

.caret {
    display: inline-block;
    width: 1px;
    height: 17px;
    margin-left: 1px;
    vertical-align: -3px;
    background-color: #202124;
}

/* pandas tables */
.df {
    border-collapse: collapse;
    table-layout: fixed;
    font-family: "Liberation Sans", Arial, sans-serif;
    color: #000;
    text-align: right;
}

.df th, .df td {
    padding: 0;
    text-align: right;
}

.df tbody th {
    padding-left: 8px;
    text-align: center;
    font-weight: 700;
}

.df tbody tr:nth-child(odd) {
    background-color: #f5f5f5;
}

.df-form {
    width: 585px;
    margin: 39px 0 0 6px;
    font-size: 11.3px;
    line-height: 13.5px;
}

.df-form thead th {
    padding-bottom: 6px;
}

.df-form thead tr {
    border-bottom: 2px solid #333;
}

.df-form tbody tr {
    height: 25px;
}

.df-form tr > :last-child {
    padding-right: 13px;
}

.df-form col:nth-child(1) { width: 36px; }
.df-form col:nth-child(2) { width: 34px; }
.df-form col:nth-child(3) { width: 34px; }
.df-form col:nth-child(4) { width: 71px; }
.df-form col:nth-child(5) { width: 72px; }
.df-form col:nth-child(6) { width: 34px; }
.df-form col:nth-child(7) { width: 68px; }
.df-form col:nth-child(8) { width: 73px; }
.df-form col:nth-child(9) { width: 71px; }
.df-form col:nth-child(10) { width: 35px; }
.df-form col:nth-child(11) { width: 57px; }

.df-nb {
    width: 619px;
    margin: 25px 0 0 6px;
    font-size: 12px;
    line-height: 15px;
}

.df-nb thead th {
    padding-bottom: 14px;
}

.df-nb thead tr {
    border-bottom: 1px solid #000;
}

.df-nb tbody tr {
    height: 27px;
}

.df-nb tr > :last-child {
    padding-right: 4px;
}

.df-nb col:nth-child(1) { width: 38px; }
.df-nb col:nth-child(2) { width: 34px; }
.df-nb col:nth-child(3) { width: 33px; }
.df-nb col:nth-child(4) { width: 75px; }
.df-nb col:nth-child(5) { width: 74px; }
.df-nb col:nth-child(6) { width: 36px; }
.df-nb col:nth-child(7) { width: 62px; }
.df-nb col:nth-child(8) { width: 65px; }
.df-nb col:nth-child(9) { width: 65px; }
.df-nb col:nth-child(10) { width: 35px; }
.df-nb col:nth-child(11) { width: 45px; }
.df-nb col:nth-child(12) { width: 57px; }

/* scrollbars */
.scrollbar {
    width: 17px;
    flex: none;
    display: flex;
    flex-direction: column;
    align-items: center;
    background-color: #f1f1f1;
}

.sb-arrow {
    width: 10px;
    height: 6px;
    margin: 6px 0;
    flex: none;
}

.sb-thumb {
    width: 17px;
    height: 225px;
    margin-top: 221px;
    background-color: #c4c4c4;
}

.sb-bottom {
    margin-top: auto;
    margin-bottom: 4px;
}

.scrollbar-site {
    position: absolute;
    top: 0;
    right: 0;
    bottom: 0;
    background-color: #eee;
    justify-content: flex-end;
    padding-bottom: 4px;
}

.scrollbar-site .sb-arrow:first-child {
    margin: 6px 0 auto;
}

.sb-thumb-low {
    height: 19px;
    margin: 0 0 6px;
    background-color: #c9c9c9;
}

.feedback {
    position: absolute;
    left: 12px;
    bottom: 16px;
    width: 20px;
    height: 20px;
}

/* jupyter header */
.nb-header {
    position: relative;
    z-index: 1;
    height: 111px;
    flex: none;
    background-color: #fff;
    box-shadow: 0 0 12px 1px rgba(87, 87, 87, 0.25);
}

.nb-top {
    height: 45px;
    display: flex;
    align-items: center;
    padding: 0 101px 5px 98px;
    border-bottom: 1px solid #e0e0e0;
}

.jp-mark {
    width: 21px;
    height: 29px;
    flex: none;
}

.jp-word {
    margin: -2px 0 0 7px;
    width: 92px;
    font-size: 25px;
    font-weight: 300;
    color: #4e4e4e;
    letter-spacing: 0.3px;
}

.nb-name {
    font-family: "Liberation Sans", sans-serif;
    font-size: 20px;
    color: #000;
    letter-spacing: -0.3px;
}

.nb-save {
    margin: 5px 0 0 6px;
    font-family: "Liberation Sans", sans-serif;
    font-size: 10px;
    color: #222;
}

.py-logo {
    margin-left: auto;
    width: 30px;
    height: 30px;
    flex: none;
}

.logout {
    width: 60px;
    height: 30px;
    margin-left: 21px;
    padding: 0;
    background-color: #fff;
    border: 1px solid #ccc;
    font-family: "Liberation Sans", sans-serif;
    font-size: 13px;
    color: #333;
}

.nb-menu-row {
    padding-left: 94px;
}

.nb-menu {
    width: 766px;
    height: 32px;
    display: flex;
    align-items: center;
    padding-left: 15px;
    gap: 30px;
    background-color: #f8f8f8;
    border-bottom: 1px solid #e7e7e7;
    font-family: "Liberation Sans", sans-serif;
    font-size: 13px;
    color: #555;
}

.not-trusted {
    margin-left: 13px;
    width: 76px;
    height: 21px;
    line-height: 19px;
    text-align: center;
    background-color: #fff;
    border: 1px solid #ccc;
    font-size: 12px;
    color: #333;
}

.kernel {
    margin-left: 6px;
    padding-left: 6px;
    border-left: 1px solid #333;
    height: 24px;
    line-height: 24px;
    color: #333;
    display: flex;
    align-items: center;
    font-size: 13.3px;
}

.kernel-dot {
    margin-left: 7px;
    width: 10px;
    height: 10px;
    border: 2px solid #444;
    border-radius: 50%;
}

.nb-tools {
    display: flex;
    padding: 5px 0 0 94px;
    gap: 5px;
}

.btn-group {
    display: flex;
}

.tb {
    height: 24px;
    padding: 0;
    display: flex;
    align-items: center;
    justify-content: center;
    gap: 5px;
    background-color: #fff;
    border: 1px solid #ccc;
    border-radius: 2px;
    font-family: "Liberation Sans", sans-serif;
    font-size: 13px;
    color: #333;
}

.btn-group .tb + .tb {
    margin-left: -1px;
}

.tb svg {
    width: 12px;
    height: 12px;
}

.tb-one { width: 28px; }
.tb-mid { width: 31px; }
.tb-arrow { width: 30px; }
.tb-run { width: 57px; }
.tb-ctl { width: 29px; }

.tb-kbd {
    width: 32px;
    margin-left: 2.5px;
}

.tb-kbd svg {
    width: 16px;
}

.cell-type {
    width: 115px;
    height: 24px;
    display: flex;
    align-items: center;
    justify-content: space-between;
    padding: 0 6px 0 4px;
    background-color: #fff;
    border: 1px solid #ccc;
    border-radius: 2px;
    font-family: "Liberation Sans", sans-serif;
    font-size: 12.5px;
    color: #555;
}

.cell-type svg {
    width: 9px;
    height: 6px;
}

/* notebook */
.nb-site {
    position: relative;
    flex: 1;
    min-height: 0;
    overflow: hidden;
    background-color: #eee;
}

.notebook {
    width: 768px;
    margin-left: 85px;
    padding: 0 15px 16px;
    background-color: #fff;
    box-shadow: 0 0 12px 1px rgba(87, 87, 87, 0.2);
}

pre {
    margin: 0;
    font-family: "Liberation Mono", "Courier New", monospace;
    font-size: 13.3px;
    line-height: 17px;
}

.trace {
    margin: -10px 0 29px;
    padding: 0 0 0 100px;
    color: #000;
}

.c-err { color: #b22b31; }
.c-path { color: #007427; }
.c-mod { color: #60c6c8; }
.c-paren { color: #b27d12; }

.cell {
    border: 1px solid transparent;
    border-radius: 2px;
    padding: 5px 6px 5px 5px;
}

.cell-selected {
    border-color: #ababab;
    border-left: 5px solid #42a5f5;
    padding-left: 1px;
}

.cell-row {
    display: flex;
}

.prompt {
    width: 88px;
    padding: 7px 6px 0 0;
    flex: none;
    text-align: right;
    font-family: "Liberation Mono", "Courier New", monospace;
    font-size: 13.3px;
    line-height: 17px;
}

.p-in { color: #303f9f; }
.p-out { color: #d84315; padding-top: 0; }

.input {
    flex: 1;
    padding: 5px 4px;
    background-color: #f7f7f7;
    border: 1px solid #cfcfcf;
    border-radius: 2px;
    color: #000;
    white-space: pre;
}

.input-sel {
    padding: 6px 4px;
}

.input-empty {
    height: 29px;
}

.selection {
    display: inline-block;
    background-color: #d0d0d0;
}

.kw { color: #008000; font-weight: 700; }
.op { color: #aa22ff; font-weight: 700; }
.str { color: #ba2121; }
.num { color: #008000; }

.out-row {
    margin-top: 6px;
}

.output {
    flex: 1;
    min-width: 0;
}

.df-shape {
    margin: 14px 0 5px 6px;
    font-family: "Liberation Sans", sans-serif;
    font-size: 14px;
    line-height: 20px;
    color: #000;
}

.h-scroll {
    height: 17px;
    width: 624px;
    display: flex;
    align-items: center;
    background-color: #eee;
}

.hs-arrow {
    width: 6px;
    height: 10px;
    margin: 0 5px 0 6px;
    flex: none;
}

.hs-thumb {
    width: 412px;
    height: 100%;
    background-color: #c8c8c8;
}

.hs-end {
    margin: 0 6px 0 auto;
}

.out-row-empty {
    margin-top: 5px;
}

.empty-df {
    width: 45px;
    height: 40px;
    margin: 0 0 7px 6px;
    padding: 19px 5px 0 0;
    border-bottom: 1px solid #000;
    font-family: "Liberation Sans", sans-serif;
    font-size: 12px;
    font-weight: 700;
    text-align: right;
    color: #000;
}

/* watermark sits over the page */
.activate {
    position: absolute;
    left: 636px;
    top: 750px;
    font-family: "Open Sans", sans-serif;
    font-size: 14.2px;
    line-height: 20px;
    color: #bdbdbd;
    white-space: nowrap;
}

.activate-big {
    font-size: 18.7px;
    line-height: 24px;
}

/* taskbar */
.taskbar {
    height: 40px;
    display: flex;
    flex: none;
    background-color: #1f2426;
    color: #fff;
}

.task-slot {
    position: relative;
    width: 49px;
    height: 40px;
    display: flex;
    align-items: center;
    justify-content: center;
    flex: none;
}

.task-fixed {
    width: 48px;
}

.task-first {
    margin-left: 3px;
}

.task-slot svg {
    width: 23px;
    height: 23px;
}

.task-slot .win-logo {
    width: 17px;
    height: 17px;
}

.task-slot:nth-child(8)::after,
.task-slot:nth-child(9)::after,
.task-slot:nth-child(10)::after {
    content: "";
    position: absolute;
    left: 5px;
    right: 5px;
    bottom: 0;
    height: 2px;
    background-color: #a6d8f0;
}

.task-active {
    background: linear-gradient(to right, #4f5353 88%, #34393b 88%);
}

.task-slot.task-active::after {
    left: 0;
    right: 0;
}

.badge {
    position: absolute;
    left: 27px;
    top: 19px;
    width: 16px;
    height: 16px;
    border-radius: 50%;
    background-color: #f00;
    font-size: 11px;
    font-weight: 700;
    line-height: 16px;
    text-align: center;
    color: #fff;
}

.tray {
    margin-left: auto;
    display: flex;
    align-items: center;
    padding-right: 13px;
}

.tray-sun {
    width: 22px;
    height: 20px;
}

.tray-weather {
    width: 66px;
    margin: 0 15px 0 9px;
    font-family: "Open Sans", sans-serif;
    font-size: 13.5px;
    white-space: pre;
}

.tray-ico {
    width: 16px;
    height: 16px;
    flex: none;
}

.tray-chev { margin-right: 8px; }
.tray-meet { margin-right: 7px; }

.tray-net {
    width: 18px;
    margin-right: 6px;
}

.clock {
    width: 60px;
    margin-left: 7px;
    text-align: center;
    font-family: "Open Sans", sans-serif;
    font-size: 12px;
    line-height: 19px;
}

.notif {
    position: relative;
    width: 40px;
    height: 40px;
    margin-left: 2px;
    display: flex;
    align-items: center;
    justify-content: center;
}

.notif svg {
    width: 16px;
    height: 14px;
    margin-top: -5px;
}

.notif-count {
    position: absolute;
    left: 18px;
    top: 16px;
    width: 20px;
    height: 20px;
    border-radius: 50%;
    border: 1px solid #8a8d8e;
    background-color: #1f2426;
    font-size: 11px;
    font-weight: 700;
    line-height: 18px;
    text-align: center;
}
```
